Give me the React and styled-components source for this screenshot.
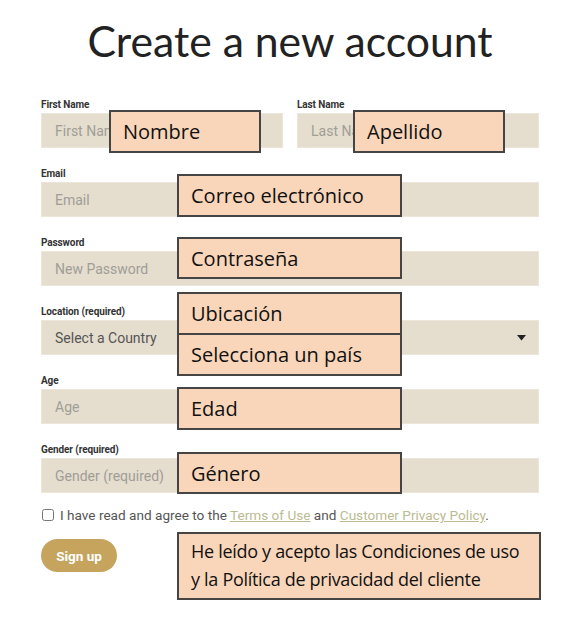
import React from "react";
import styled, { createGlobalStyle } from "styled-components";

const GlobalStyle = createGlobalStyle`
  html, body { margin: 0; padding: 0; background: #ffffff; }
  body { font-family: Roboto, "Liberation Sans", sans-serif; }
  * { box-sizing: border-box; }
`;

const Page = styled.div`
  position: relative;
  width: 586px;
  height: 630px;
  padding: 13px 47px 0 41px;
  overflow: hidden;
`;

const Title = styled.h1`
  margin: 0 0 30px;
  font-family: Lato, "Open Sans", sans-serif;
  font-weight: 400;
  font-size: 42.7px;
  line-height: 56px;
  color: #222222;
  text-align: center;
`;

const Form = styled.form`
  display: flex;
  flex-direction: column;
  align-items: flex-start;
`;

const Fields = styled.div`
  align-self: stretch;
  display: flex;
  flex-direction: column;
  gap: 20px;
`;

const Row = styled.div`
  display: grid;
  grid-template-columns: 1fr 1fr;
  column-gap: 14px;
`;

const Field = styled.div`
  display: flex;
  flex-direction: column;
`;

const Label = styled.label`
  font-family: Roboto, "Liberation Sans", sans-serif;
  font-size: 10px;
  font-weight: 700;
  line-height: 12px;
  color: #333333;
  margin-bottom: 2px;
  letter-spacing: -0.1px;
`;

const Input = styled.input`
  height: 35px;
  width: 100%;
  border: 1px solid #ece6da;
  background: #e5ddce;
  padding: 0 13px;
  font-family: Roboto, "Liberation Sans", sans-serif;
  font-size: 14px;
  color: #444;
  outline: none;
  &::placeholder { color: #a09d97; }
`;

const SelectBox = styled.div`
  height: 35px;
  display: flex;
  align-items: center;
  justify-content: space-between;
  border: 1px solid #ece6da;
  background: #e5ddce;
  padding: 0 12px 0 13px;
  font-size: 14px;
  color: #555555;
`;

const Agreement = styled.label`
  margin-top: 14px;
  display: flex;
  align-items: center;
  gap: 6px;
  font-size: 13.6px;
  line-height: 16px;
  color: #555555;
`;

const Check = styled.input`
  margin: 0 0 0 1px;
  width: 12px;
  height: 12px;
`;

const Link = styled.a`
  color: #bbbb92;
  text-decoration: underline;
`;

const Button = styled.button`
  margin-top: 16px;
  width: 76px;
  height: 33px;
  border: none;
  border-radius: 17px;
  background: #c6a45e;
  color: #ffffff;
  font-family: Roboto, "Liberation Sans", sans-serif;
  font-weight: 700;
  font-size: 13.5px;
  padding: 0;
`;

const Note = styled.div`
  position: absolute;
  left: ${(p) => p.$x}px;
  top: ${(p) => p.$y}px;
  width: ${(p) => p.$w}px;
  border: 2px solid #454545;
  background: #f9d6ba;
  display: flex;
  flex-direction: column;
  font-family: "Open Sans", "Noto Sans", sans-serif;
  font-size: 20px;
  color: #111111;
`;

const NoteLine = styled.div`
  height: ${(p) => p.$h}px;
  display: flex;
  align-items: center;
  padding-left: 12px;
  & + & { border-top: 2px solid #454545; }
`;

const NoteText = styled.div`
  padding: 3px 12px 5px;
  line-height: 28px;
  font-size: 18px;
  letter-spacing: -0.3px;
  white-space: nowrap;
`;

const Caret = () => (
  <svg width="9" height="6" viewBox="0 0 9 6" aria-hidden="true">
    <path d="M0 0 H9 L4.5 5.5 Z" fill="#222" />
  </svg>
);

export default function App() {
  return (
    <>
      <GlobalStyle />
      <Page>
        <Title>Create a new account</Title>
        <Form onSubmit={(e) => e.preventDefault()}>
          <Fields>
            <Row>
              <Field>
                <Label>First Name</Label>
                <Input placeholder="First Name" />
              </Field>
              <Field>
                <Label>Last Name</Label>
                <Input placeholder="Last Name" />
              </Field>
            </Row>
            <Field>
              <Label>Email</Label>
              <Input placeholder="Email" />
            </Field>
            <Field>
              <Label>Password</Label>
              <Input type="password" placeholder="New Password" />
            </Field>
            <Field>
              <Label>Location (required)</Label>
              <SelectBox>
                <span>Select a Country</span>
                <Caret />
              </SelectBox>
            </Field>
            <Field>
              <Label>Age</Label>
              <Input placeholder="Age" />
            </Field>
            <Field>
              <Label>Gender (required)</Label>
              <Input placeholder="Gender (required)" />
            </Field>
          </Fields>
          <Agreement>
            <Check type="checkbox" />
            <span>
              I have read and agree to the <Link href="#">Terms of Use</Link> and{" "}
              <Link href="#">Customer Privacy Policy</Link>.
            </span>
          </Agreement>
          <Button type="submit">Sign up</Button>
        </Form>

        <Note $x={109} $y={110} $w={152}>
          <NoteLine $h={39}>Nombre</NoteLine>
        </Note>
        <Note $x={353} $y={110} $w={152}>
          <NoteLine $h={39}>Apellido</NoteLine>
        </Note>
        <Note $x={177} $y={174} $w={225}>
          <NoteLine $h={39}>Correo electrónico</NoteLine>
        </Note>
        <Note $x={177} $y={237} $w={225}>
          <NoteLine $h={38}>Contraseña</NoteLine>
        </Note>
        <Note $x={177} $y={292} $w={225}>
          <NoteLine $h={39}>Ubicación</NoteLine>
          <NoteLine $h={41}>Selecciona un país</NoteLine>
        </Note>
        <Note $x={177} $y={387} $w={225}>
          <NoteLine $h={39}>Edad</NoteLine>
        </Note>
        <Note $x={177} $y={452} $w={225}>
          <NoteLine $h={38}>Género</NoteLine>
        </Note>
        <Note $x={177} $y={532} $w={364}>
          <NoteText>
            He leído y acepto las Condiciones de uso
            <br />
            y la Política de privacidad del cliente
          </NoteText>
        </Note>
      </Page>
    </>
  );
}
